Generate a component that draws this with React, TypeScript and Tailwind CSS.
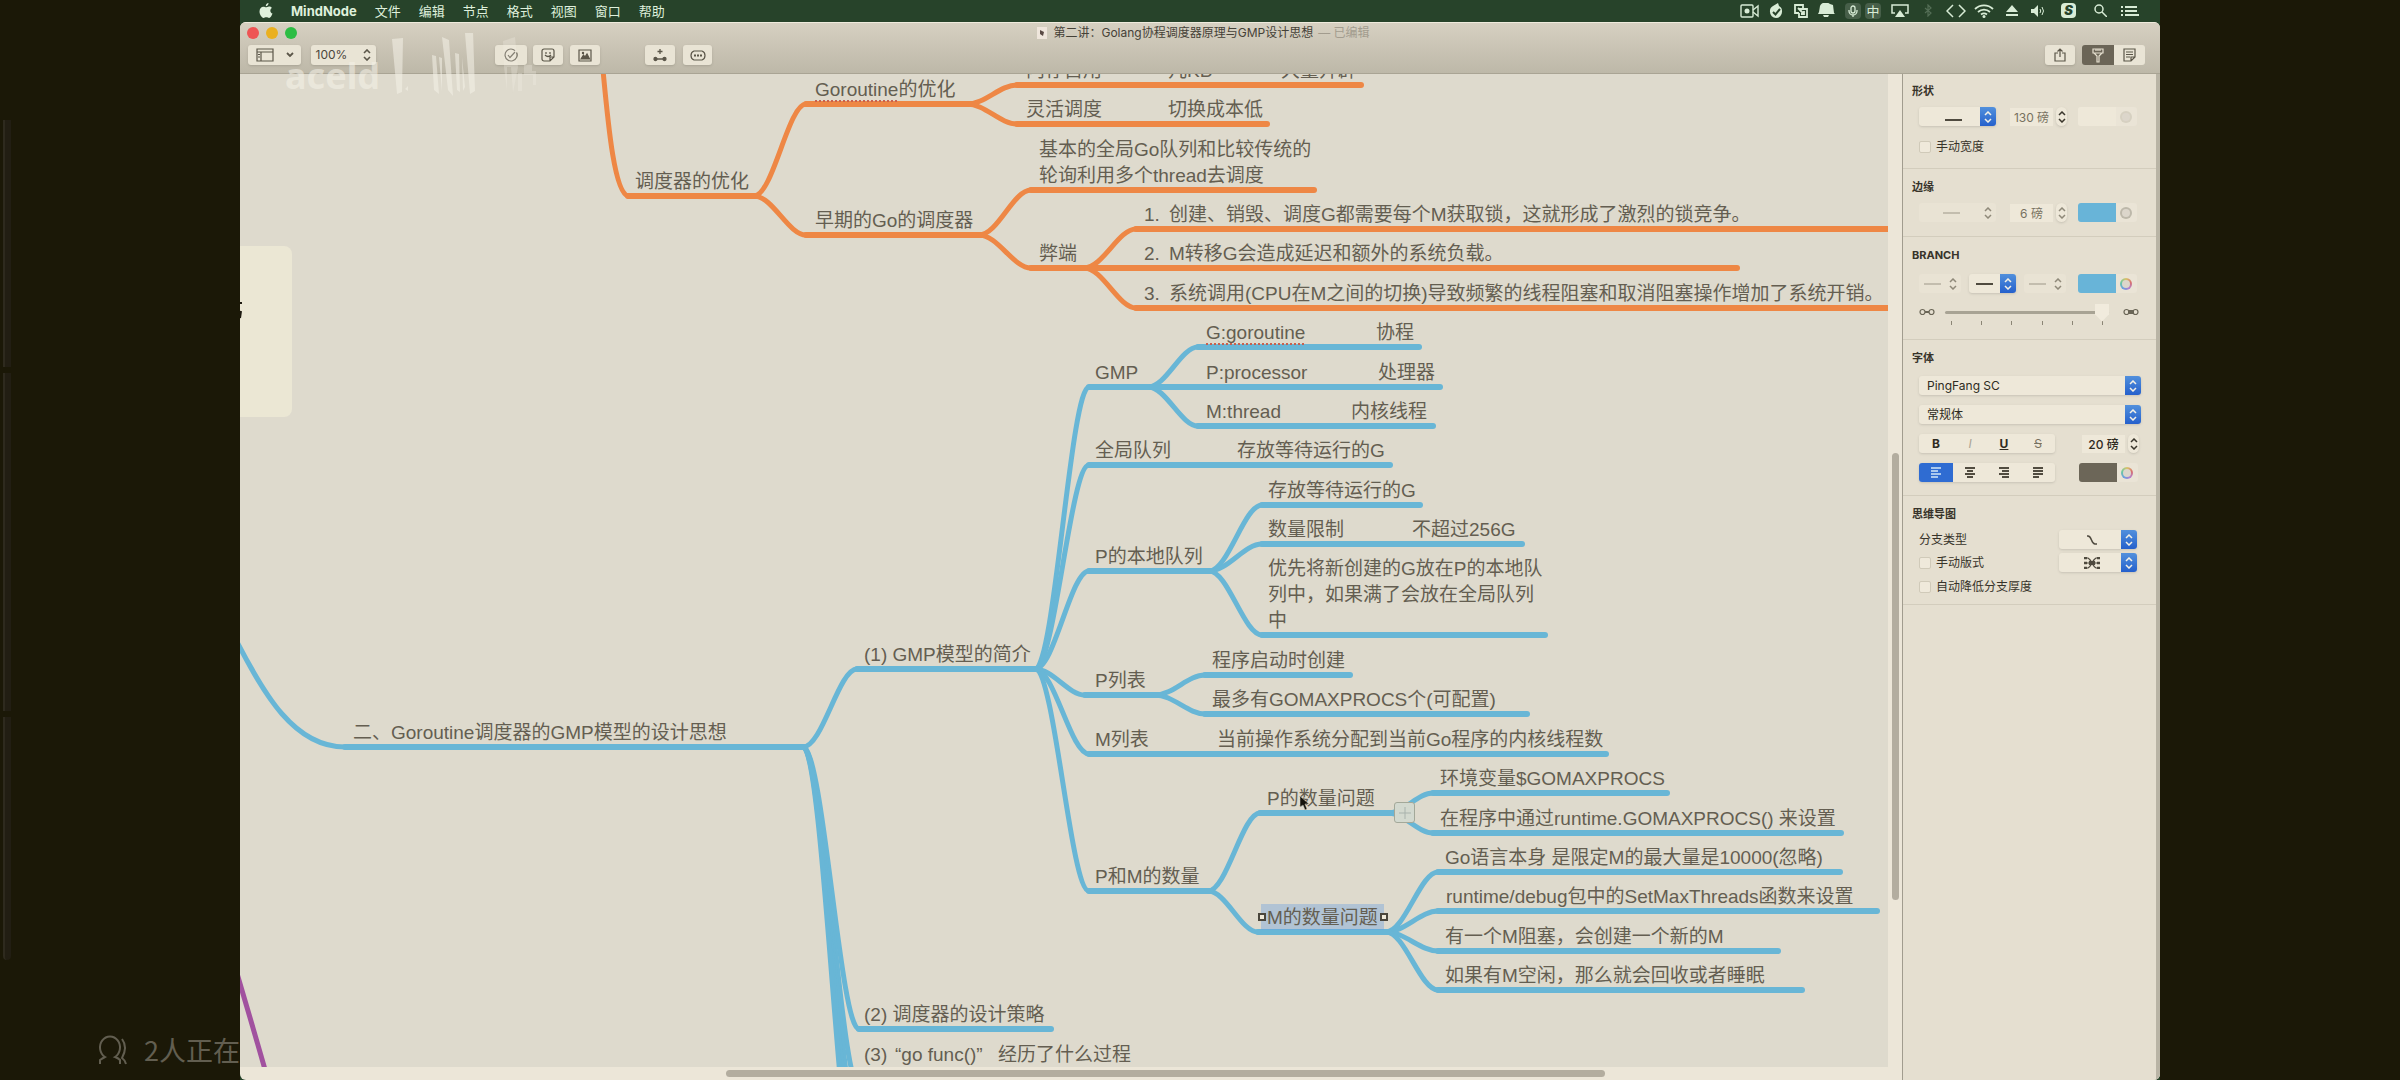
import type { ReactNode } from "react";

/* ------------------------------------------------------------------ */
/* Mind map data                                                       */
/* ------------------------------------------------------------------ */

const ORANGE = "#ee8745";
const BLUE = "#68b6d6";
const PURPLE = "#a1519f";

/* Offset of the visible part of the document canvas. */
const SCROLL = { x: 240, y: 74 };

type Label = { x: number; text: string; misspelt?: string };
type Topic = {
  color: string;
  from: number;
  to: number;
  y: number;
  labels: Label[];
  lines?: number;
  selected?: boolean;
};

const topics: Topic[] = [
  { color: ORANGE, from: 628, to: 758, y: 196, labels: [{ x: 635, text: "调度器的优化" }] },
  { color: ORANGE, from: 806, to: 972, y: 104, labels: [{ x: 815, text: "的优化", misspelt: "Goroutine" }] },
  { color: ORANGE, from: 1017, to: 1361, y: 85, labels: [{ x: 1026, text: "内存占用" }, { x: 1168, text: "几KB" }, { x: 1281, text: "大量开辟" }] },
  { color: ORANGE, from: 1017, to: 1267, y: 124, labels: [{ x: 1026, text: "灵活调度" }, { x: 1168, text: "切换成本低" }] },
  { color: ORANGE, from: 806, to: 984, y: 235, labels: [{ x: 815, text: "早期的Go的调度器" }] },
  { color: ORANGE, from: 1031, to: 1314, y: 190, lines: 2, labels: [{ x: 1039, text: "基本的全局Go队列和比较传统的\n轮询利用多个thread去调度" }] },
  { color: ORANGE, from: 1031, to: 1090, y: 268, labels: [{ x: 1039, text: "弊端" }] },
  { color: ORANGE, from: 1136, to: 1900, y: 229, labels: [{ x: 1144, text: "1." }, { x: 1169, text: "创建、销毁、调度G都需要每个M获取锁，这就形成了激烈的锁竞争。" }] },
  { color: ORANGE, from: 1090, to: 1737, y: 268, labels: [{ x: 1144, text: "2." }, { x: 1169, text: "M转移G会造成延迟和额外的系统负载。" }] },
  { color: ORANGE, from: 1136, to: 1900, y: 308, labels: [{ x: 1144, text: "3." }, { x: 1169, text: "系统调用(CPU在M之间的切换)导致频繁的线程阻塞和取消阻塞操作增加了系统开销。" }] },

  { color: BLUE, from: 345, to: 805, y: 747, labels: [{ x: 353, text: "二、Goroutine调度器的GMP模型的设计思想" }] },
  { color: BLUE, from: 857, to: 1038, y: 669, labels: [{ x: 864, text: "(1) GMP模型的简介" }] },
  { color: BLUE, from: 859, to: 1051, y: 1029, labels: [{ x: 864, text: "(2) 调度器的设计策略" }] },
  { color: BLUE, from: 860, to: 1130, y: 1069, labels: [{ x: 864, text: "(3)" }, { x: 895, text: "“go func()”" }, { x: 998, text: "经历了什么过程" }] },

  { color: BLUE, from: 1089, to: 1152, y: 387, labels: [{ x: 1095, text: "GMP" }] },
  { color: BLUE, from: 1198, to: 1419, y: 347, labels: [{ x: 1206, text: "", misspelt: "G:goroutine" }, { x: 1376, text: "协程" }] },
  { color: BLUE, from: 1152, to: 1440, y: 387, labels: [{ x: 1206, text: "P:processor" }, { x: 1378, text: "处理器" }] },
  { color: BLUE, from: 1198, to: 1433, y: 426, labels: [{ x: 1206, text: "M:thread" }, { x: 1351, text: "内核线程" }] },
  { color: BLUE, from: 1089, to: 1390, y: 465, labels: [{ x: 1095, text: "全局队列" }, { x: 1237, text: "存放等待运行的G" }] },
  { color: BLUE, from: 1089, to: 1212, y: 571, labels: [{ x: 1095, text: "P的本地队列" }] },
  { color: BLUE, from: 1262, to: 1420, y: 505, labels: [{ x: 1268, text: "存放等待运行的G" }] },
  { color: BLUE, from: 1262, to: 1522, y: 544, labels: [{ x: 1268, text: "数量限制" }, { x: 1412, text: "不超过256G" }] },
  { color: BLUE, from: 1262, to: 1545, y: 635, lines: 3, labels: [{ x: 1268, text: "优先将新创建的G放在P的本地队\n列中，如果满了会放在全局队列\n中" }] },
  { color: BLUE, from: 1085, to: 1160, y: 695, labels: [{ x: 1095, text: "P列表" }] },
  { color: BLUE, from: 1205, to: 1350, y: 675, labels: [{ x: 1212, text: "程序启动时创建" }] },
  { color: BLUE, from: 1205, to: 1527, y: 714, labels: [{ x: 1212, text: "最多有GOMAXPROCS个(可配置)" }] },
  { color: BLUE, from: 1089, to: 1606, y: 754, labels: [{ x: 1095, text: "M列表" }, { x: 1217, text: "当前操作系统分配到当前Go程序的内核线程数" }] },
  { color: BLUE, from: 1089, to: 1211, y: 891, labels: [{ x: 1095, text: "P和M的数量" }] },
  { color: BLUE, from: 1260, to: 1392, y: 813, labels: [{ x: 1267, text: "P的数量问题" }] },
  { color: BLUE, from: 1258, to: 1388, y: 932, selected: true, labels: [{ x: 1267, text: "M的数量问题" }] },
  { color: BLUE, from: 1433, to: 1667, y: 793, labels: [{ x: 1440, text: "环境变量$GOMAXPROCS" }] },
  { color: BLUE, from: 1433, to: 1841, y: 833, labels: [{ x: 1440, text: "在程序中通过runtime.GOMAXPROCS() 来设置" }] },
  { color: BLUE, from: 1438, to: 1840, y: 872, labels: [{ x: 1445, text: "Go语言本身 是限定M的最大量是10000(忽略)" }] },
  { color: BLUE, from: 1438, to: 1877, y: 911, labels: [{ x: 1446, text: "runtime/debug包中的SetMaxThreads函数来设置" }] },
  { color: BLUE, from: 1438, to: 1778, y: 951, labels: [{ x: 1445, text: "有一个M阻塞，会创建一个新的M" }] },
  { color: BLUE, from: 1438, to: 1802, y: 990, labels: [{ x: 1445, text: "如果有M空闲，那么就会回收或者睡眠" }] },
];

/* Connectors: colour, parent end, child start. */
const links: [string, number, number, number, number][] = [
  [ORANGE, 754, 196, 806, 104],
  [ORANGE, 754, 196, 806, 235],
  [ORANGE, 967, 104, 1017, 85],
  [ORANGE, 967, 104, 1017, 124],
  [ORANGE, 979, 235, 1031, 190],
  [ORANGE, 979, 235, 1031, 268],
  [ORANGE, 1084, 268, 1136, 229],
  [ORANGE, 1084, 268, 1136, 308],
  [BLUE, 803, 747, 857, 669],
  [BLUE, 803, 747, 859, 1029],
  [BLUE, 803, 747, 860, 1090],
  [BLUE, 803, 747, 860, 1130],
  [BLUE, 803, 747, 860, 1170],
  [BLUE, 803, 747, 860, 1210],
  [BLUE, 1035, 669, 1089, 387],
  [BLUE, 1035, 669, 1089, 465],
  [BLUE, 1035, 669, 1089, 571],
  [BLUE, 1035, 669, 1085, 695],
  [BLUE, 1035, 669, 1089, 754],
  [BLUE, 1035, 669, 1089, 891],
  [BLUE, 1148, 387, 1198, 347],
  [BLUE, 1148, 387, 1198, 426],
  [BLUE, 1209, 571, 1262, 505],
  [BLUE, 1209, 571, 1262, 544],
  [BLUE, 1209, 571, 1262, 635],
  [BLUE, 1155, 695, 1205, 675],
  [BLUE, 1155, 695, 1205, 714],
  [BLUE, 1208, 891, 1260, 813],
  [BLUE, 1208, 891, 1258, 932],
  [BLUE, 1388, 813, 1433, 793],
  [BLUE, 1388, 813, 1433, 833],
  [BLUE, 1386, 932, 1438, 872],
  [BLUE, 1386, 932, 1438, 911],
  [BLUE, 1386, 932, 1438, 951],
  [BLUE, 1386, 932, 1438, 990],
];

function curve(x0: number, y0: number, x1: number, y1: number) {
  const dx = x1 - x0;
  return `M${x0} ${y0}C${x0 + dx * 0.36} ${y0} ${x0 + dx * 0.66} ${y1} ${x1} ${y1}`;
}

const TOPIC_LINE = 26;

function MindMap() {
  return (
    <div className="relative min-h-0 min-w-0 overflow-hidden bg-[#dedacd]">
      <div className="absolute left-0 top-[172px] h-[171px] w-[52px] rounded-r-lg bg-[#ebe7d4]" />
      <svg className="absolute left-0 top-0 h-[1006px] w-[1660px]" viewBox="240 74 1660 1006" fill="none">
        <g strokeWidth="5" strokeLinecap="round">
          <path stroke={ORANGE} d="M602 60C607 110 613 192 628 196" />
          <path stroke={BLUE} d="M236 640C264 694 294 747 345 747" />
          <path stroke={PURPLE} d="M236 970Q252 1024 268 1080" />
          {links.map(([color, x0, y0, x1, y1], i) => (
            <path key={i} stroke={color} d={curve(x0, y0, x1, y1)} />
          ))}
        </g>
        <g strokeWidth="6" strokeLinecap="round">
          {topics
            .filter((t) => t.y < 1060)
            .map((t, i) => (
              <path key={i} stroke={t.color} d={`M${t.from} ${t.y}H${t.to}`} />
            ))}
        </g>
        <path d="M240 303h2M240 318l1-7" stroke="#1d1a10" strokeWidth="2" />
      </svg>
      {topics.map((t) =>
        t.labels.map((l) => (
          <p
            key={`${l.x}-${t.y}`}
            className="absolute whitespace-pre font-['Liberation_Sans','Noto_Sans_CJK_SC',sans-serif] text-[19px] leading-[26px] text-[#645e51]"
            style={{ left: l.x - SCROLL.x, top: t.y - SCROLL.y - 1 - TOPIC_LINE * (t.lines ?? 1) }}
          >
            {t.selected && <span className="absolute -left-[6px] -top-px h-[26px] w-[123px] bg-[#6f9fdf]/40" />}
            {t.selected && <span className="absolute -left-[9px] top-[8px] size-[8px] border-2 border-[#4a463c] bg-[#efe9d9]" />}
            {t.selected && <span className="absolute left-[113px] top-[8px] size-[8px] border-2 border-[#4a463c] bg-[#efe9d9]" />}
            {l.misspelt && (
              <span className="underline decoration-[#c8604f] decoration-dotted decoration-2 underline-offset-4">{l.misspelt}</span>
            )}
            <span className="relative">{l.text}</span>
          </p>
        )),
      )}
      <button
        aria-label="折叠"
        className="absolute left-[1154px] top-[728px] flex h-[21px] w-[21px] items-center justify-center rounded-[3px] border border-[#a3a899] bg-[#d3d9cf]"
      >
        <svg viewBox="0 0 12 12" className="size-3" stroke="#a9b3ad">
          <path d="M6 0v12M0 6h12" />
        </svg>
      </button>
      <svg className="absolute left-[1058px] top-[721px] h-4 w-3" viewBox="0 0 12 16">
        <path d="M2 1v11l3-2 2 5 2-1-2-5h4z" fill="#15130c" stroke="#d9d4c5" strokeWidth="0.5" />
      </svg>
    </div>
  );
}

/* ------------------------------------------------------------------ */
/* Menu bar                                                            */
/* ------------------------------------------------------------------ */

const menus = ["文件", "编辑", "节点", "格式", "视图", "窗口", "帮助"];

function StatusIcons() {
  return (
    <div className="ml-auto flex items-center fill-none stroke-[#d8ecd6] pr-[21px] text-[#d8ecd6]">
      <svg className="h-[14px] w-[19px]" viewBox="0 0 19 14" strokeWidth="1.4">
        <rect x="1" y="1" width="12" height="12" rx="1" />
        <circle cx="7" cy="7" r="2.5" fill="currentColor" stroke="none" />
        <path d="M13 6l5-4v10l-5-4" />
      </svg>
      <svg className="ml-[10px] h-4 w-[14px]" viewBox="0 0 14 16">
        <path d="M4 3l5-3 1 3a6 6 0 013 6 6 6 0 01-6 6 6 6 0 01-6-6 6 6 0 013-6z" fill="currentColor" stroke="none" />
        <path d="M4 9l2.500 2.500L11 6" stroke="#27432a" strokeWidth="2" />
      </svg>
      <svg className="ml-[11px] h-[14px] w-[14px]" viewBox="0 0 14 14" strokeWidth="1.800">
        <path d="M9 5V1H1v8h4M5 5h8v8H5V9M4 4l6 6M10 7v3H7" />
      </svg>
      <svg className="ml-[9px] h-[15px] w-[18px]" viewBox="0 0 18 15">
        <path d="M3 3a6 5 0 0110-2l3 1 1 8 1 1H1l1-2zM6 12h6l-1 2H7z" fill="currentColor" stroke="none" />
      </svg>
      <span className="ml-[10px] flex size-4 items-center justify-center rounded-sm bg-white/15">
        <svg className="h-3 w-[10px]" viewBox="0 0 10 12" strokeWidth="1.300">
          <rect x="3" y="1" width="4" height="7" rx="2" />
          <path d="M1 5v1a4 4 0 008 0V5M5 10v2" />
        </svg>
      </span>
      <span className="ml-1 flex size-4 items-center justify-center rounded-sm bg-white/15 text-[13px] leading-4">中</span>
      <svg className="ml-[10px] h-[14px] w-[18px]" viewBox="0 0 18 14" strokeWidth="1.500">
        <path d="M4 9H1V1h16v8h-3" />
        <path d="M9 6l5 7H4z" fill="currentColor" stroke="none" />
      </svg>
      <svg className="ml-[15px] h-[13px] w-2 opacity-25" viewBox="0 0 8 13" strokeWidth="1.200">
        <path d="M1 4l6 5-3 3V1l3 3-6 5" />
      </svg>
      <svg className="ml-[14px] h-[14px] w-5" viewBox="0 0 20 14" strokeWidth="1.500">
        <path d="M7 1L1 7l6 6M13 1l6 6-6 6" />
      </svg>
      <svg className="ml-[8px] h-[14px] w-5" viewBox="0 0 20 14" strokeWidth="1.800">
        <path d="M1 5a13 13 0 0118 0M4 8a9 9 0 0112 0M7 10.500a5 5 0 016 0" />
        <circle cx="10" cy="12.500" r="1.500" fill="currentColor" stroke="none" />
      </svg>
      <svg className="ml-[12px] h-[11px] w-3" viewBox="0 0 12 11" fill="currentColor" stroke="none">
        <path d="M6 0l6 7H0zM0 9h12v2H0z" />
      </svg>
      <svg className="ml-[13px] h-3 w-[14px]" viewBox="0 0 14 12">
        <path d="M0 4h3l4-4v12L3 8H0z" fill="currentColor" stroke="none" />
        <path d="M9 4q1.500 2 0 4M11 2q3 4 0 8" />
      </svg>
      <span className="ml-4 flex h-[15px] w-[15px] items-center justify-center rounded-sm bg-[#d8ecd6] text-[13px] font-black italic leading-none text-[#27432a]">
        S
      </span>
      <svg className="ml-[18px] size-[13px]" viewBox="0 0 13 13" strokeWidth="1.500">
        <circle cx="5" cy="5" r="4" />
        <path d="M8 8l5 5" />
      </svg>
      <svg className="ml-[14px] h-3 w-[18px]" viewBox="0 0 18 12" strokeWidth="2">
        <path d="M0 2h2M4 2h12M0 6h2M4 6h12M0 10h2M4 10h14" />
      </svg>
    </div>
  );
}

function MenuBar() {
  return (
    <header className="flex h-[22px] shrink-0 items-center bg-[#27432a] pb-px text-[13px] leading-5 text-[#dff0dc]">
      <svg className="ml-[19px] h-4 w-[14px]" viewBox="0 0 14 16" fill="currentColor">
        <path d="M9.500 0c.1 1.600-1.200 3.100-2.700 3.200C6.600 1.700 8 .2 9.500 0zM7 4.300c.7 0 1.700-.9 3.200-.8 1 0 2 .5 2.700 1.400-2.300 1.400-2 4.700.6 5.700-.7 2-2 4.300-3.400 4.300-1 0-1.500-.7-2.800-.7s-1.800.7-2.800.7C2.700 14.900.500 11.600.500 8.600c0-3 1.900-4.900 3.900-4.900 1.100 0 2 .6 2.600.6z" />
      </svg>
      <nav className="flex gap-[18px]">
        <button className="ml-[18px] font-bold">MindNode</button>
        {menus.map((m) => (
          <button key={m}>{m}</button>
        ))}
      </nav>
      <StatusIcons />
    </header>
  );
}

/* ------------------------------------------------------------------ */
/* Title and tool bar                                                  */
/* ------------------------------------------------------------------ */

function ToolButton({ label, className, children }: { label: string; className: string; children: ReactNode }) {
  return (
    <button
      aria-label={label}
      className={`flex h-5 items-center justify-center rounded-[3px] bg-[#e9e4d5] fill-none stroke-[#5b5649] shadow-sm ${className}`}
    >
      {children}
    </button>
  );
}

function Watermark() {
  return (
    <div className="pointer-events-none absolute left-[45px] top-[11px] z-10 flex text-[#f5f2e8] opacity-55">
      <span className="pt-[26px] font-['Noto_Sans',sans-serif] text-[36px] font-bold leading-[34px]">aceld</span>
      <svg className="ml-3 h-[66px] w-[145px]" viewBox="0 0 145 66" fill="currentColor">
        <path d="M0 6l11-1-1 54-5 2zM13 56l3-3v5zM40 22l4 1 3 38-5-4zM50 4l7 3 4 56-5-6zM63 20l4 1 1 38-3-2zM73 0l8-2 2 60-5 3zM47 24l3 1v34zM70 24l3 30-2 4z" />
        <path d="M111 8l12-4 3 30-5 26-2-26h-4v24l-3-24zM132 32h8v6h4v14h-3V42h-9zM126 40h4v18h-4z" opacity=".5" />
      </svg>
    </div>
  );
}

function TitleBar() {
  return (
    <div className="relative h-[52px] shrink-0 border-b border-[#a9a494] border-t border-t-[#efebdd] bg-linear-to-b from-[#d6d0c1] to-[#bdb8a8]">
      <div className="flex h-[19px] items-center">
        <div className="flex flex-1 gap-[7px] pl-[7px]">
          <button aria-label="关闭" className="size-3 rounded-full bg-[#ee5454]" />
          <button aria-label="最小化" className="size-3 rounded-full bg-[#eab020]" />
          <button aria-label="缩放" className="size-3 rounded-full bg-[#2dbd44]" />
        </div>
        <h1 className="flex items-center text-[12px] leading-4 text-[#454137]">
          <svg className="mr-[6px] h-3 w-[10px]" viewBox="0 0 10 12">
            <path d="M0 0h10v12H0z" fill="#efe6dc" />
            <path d="M3 3l4 2-1 4-3-2z" fill="#5a4a44" />
          </svg>
          <span>第二讲：Golang协程调度器原理与GMP设计思想</span>
          <span className="ml-[5px] text-[#a29c8e]">— 已编辑</span>
        </h1>
        <div className="flex-1" />
      </div>
      <div className="mt-[3px] flex items-center pl-2 pr-[15px]">
        <ToolButton label="显示" className="w-[53px] gap-3">
          <svg className="h-[14px] w-[18px]" viewBox="0 0 18 14" strokeWidth="1.200">
            <path d="M1 1h16v12H1zM1 4h16M5 4v9M2 6.500h2M2 9h2" />
          </svg>
          <svg className="h-[6px] w-2" viewBox="0 0 8 6" strokeWidth="1.800">
            <path d="M1 1l3 3 3-3" />
          </svg>
        </ToolButton>
        <ToolButton label="缩放比例" className="ml-[10px] w-[65px] gap-4 text-[12px] text-[#4b463b]">
          <span>100%</span>
          <svg className="h-3 w-2" viewBox="0 0 8 12" strokeWidth="1.600">
            <path d="M1 4l3-3 3 3M1 8l3 3 3-3" />
          </svg>
        </ToolButton>
        <ToolButton label="任务" className="ml-[119px] w-8">
          <svg className="size-[14px]" viewBox="0 0 14 14" strokeWidth="1.200">
            <path d="M12.500 4.500A6 6 0 117 1c2 0 3 .7 4 1.700" />
            <path d="M4 7l2 2.500L11 4" />
          </svg>
        </ToolButton>
        <ToolButton label="贴纸" className="ml-[6px] w-[30px]">
          <svg className="size-[14px]" viewBox="0 0 14 14" strokeWidth="1.200">
            <path d="M3 1h8a2 2 0 012 2v6l-4 4H3a2 2 0 01-2-2V3a2 2 0 012-2zM13 9h-4v4M5 4v2M9 4v2M4 7q3 3 6 0" />
          </svg>
        </ToolButton>
        <ToolButton label="图像" className="ml-[7px] w-[30px]">
          <svg className="h-[13px] w-[14px]" viewBox="0 0 14 13" strokeWidth="1.200">
            <path d="M1 1h12v11H1z" />
            <path d="M3 10l2.500-4 1.500 2 2-3 2.500 5z" fill="#5b5649" />
            <circle cx="5" cy="4" r=".6" />
          </svg>
        </ToolButton>
        <ToolButton label="新建节点" className="ml-[45px] w-[30px]">
          <svg className="size-[14px]" viewBox="0 0 14 14" strokeWidth="1.300">
            <path d="M7 1v5M4.500 3.500h5M2 11h10" />
            <circle cx="2.500" cy="11" r="1.500" fill="#5b5649" />
            <circle cx="11.500" cy="11" r="1.500" fill="#5b5649" />
          </svg>
        </ToolButton>
        <ToolButton label="更多" className="ml-2 w-[29px]">
          <svg className="h-[11px] w-4" viewBox="0 0 16 11" strokeWidth="1.200">
            <path d="M4 1h8q3 1 3 4.500T12 10H4Q1 9 1 5.500T4 1z" />
            <path d="M4 5.500h2M7 5.500h2M10 5.500h2" strokeWidth="2" />
          </svg>
        </ToolButton>
        <ToolButton label="共享" className="ml-auto w-[30px]">
          <svg className="h-[14px] w-3" viewBox="0 0 12 14" strokeWidth="1.200">
            <path d="M4 5H1v8h10V5H8M6 9V1M3.500 3.500L6 1l2.500 2.500" />
          </svg>
        </ToolButton>
        <div className="ml-[7px] flex overflow-hidden rounded-[3px]">
          <button aria-label="样式" aria-pressed="true" className="flex h-5 w-8 items-center justify-center bg-[#6b6557]">
            <svg className="h-[15px] w-3" viewBox="0 0 12 15" fill="none" stroke="#e6e0d0" strokeWidth="1.200">
              <path d="M1 1h10v4H1zM2 5l3 3v6h2V8l3-3M4 1v2M6 1v2M8 1v2" />
            </svg>
          </button>
          <button aria-label="备注" className="flex h-5 w-[31px] items-center justify-center bg-[#e9e4d5]">
            <svg className="h-[14px] w-[13px]" viewBox="0 0 13 14" fill="none" stroke="#5b5649" strokeWidth="1.200">
              <path d="M1 1h11v8l-4 4H1zM12 9H8v4M3 4h7M3 6.500h7M3 9h4" />
            </svg>
          </button>
        </div>
      </div>
    </div>
  );
}

/* ------------------------------------------------------------------ */
/* Inspector                                                           */
/* ------------------------------------------------------------------ */

function Arrows({ stroke }: { stroke: string }) {
  return (
    <svg className="h-3 w-2" viewBox="0 0 8 12" fill="none" stroke={stroke} strokeWidth="1.500">
      <path d="M1 4l3-3 3 3M1 8l3 3 3-3" />
    </svg>
  );
}

function Dropdown({
  label,
  width,
  value,
  art,
  disabled,
}: {
  label: string;
  width: string;
  value?: string;
  art?: ReactNode;
  disabled?: boolean;
}) {
  return (
    <span className={`relative flex h-[19px] rounded-[3px] ${disabled ? "bg-[#e9e3d4]" : "bg-[#eee8d9] shadow-sm"} ${width}`}>
      <select
        aria-label={label}
        disabled={disabled}
        className="h-full w-full appearance-none bg-transparent pl-2 text-[12px] leading-4 text-[#2f2b22]"
      >
        <option>{value}</option>
      </select>
      {art && <span className="pointer-events-none absolute inset-y-0 left-0 right-4 flex items-center justify-center">{art}</span>}
      <span
        className={`pointer-events-none absolute inset-y-0 right-0 flex w-4 items-center justify-center rounded-r-[3px] ${
          disabled ? "" : "bg-linear-to-b from-[#5290dc] to-[#2560cc]"
        }`}
      >
        <Arrows stroke={disabled ? "#8f8979" : "#f3f0e6"} />
      </span>
    </span>
  );
}

function Dash({ faded }: { faded?: boolean }) {
  return <span className={`h-[2px] w-[17px] ${faded ? "bg-[#c3bdae]" : "bg-[#4f4a3f]"}`} />;
}

function Measure({ label, value, strong, dim }: { label: string; value: string; strong?: boolean; dim?: boolean }) {
  return (
    <span className="flex items-center gap-[3px]">
      <input
        aria-label={label}
        defaultValue={value}
        className={`h-[18px] w-[43px] bg-[#eee8d9] text-center text-[12px] leading-4 ${strong ? "font-medium text-[#2f2b22]" : "text-[#77715f]"}`}
      />
      <button aria-label={`${label}步进`} className="flex h-[19px] w-[11px] items-center justify-center rounded-md bg-[#eee8d9] shadow-sm">
        <Arrows stroke={dim ? "#8f8979" : "#3a362c"} />
      </button>
    </span>
  );
}

function Wheel({ tone }: { tone: "colour" | "grey" | "faint" }) {
  const fill =
    tone === "colour"
      ? "bg-[conic-gradient(#d9c46a,#d96f6f,#b27fd0,#6a9fe0,#6cc9a0,#d9c46a)]"
      : tone === "grey"
        ? "bg-[#bdb8aa]"
        : "bg-[#d6d0c1]";
  return (
    <span className={`flex size-3 items-center justify-center rounded-full ${fill}`}>
      <span className="size-2 rounded-full bg-[#dcd6cb]" />
    </span>
  );
}

function ColorWell({ label, swatch, tone }: { label: string; swatch: string; tone: "colour" | "grey" | "faint" }) {
  return (
    <button aria-label={label} className="ml-auto flex h-[19px] w-[59px] items-center overflow-hidden rounded-[3px] bg-[#eae4d6]">
      <span className={`h-full w-[38px] ${swatch}`} />
      <span className="pl-1">
        <Wheel tone={tone} />
      </span>
    </button>
  );
}

function Check({ label }: { label: string }) {
  return (
    <label className="flex items-center gap-[5px] text-[12px] leading-4 text-[#37332a]">
      <input type="checkbox" className="size-3 appearance-none rounded-[2px] border border-[#d0cab9] bg-[#efe9db]" />
      {label}
    </label>
  );
}

function Section({ title, className, children }: { title: string; className: string; children: ReactNode }) {
  return (
    <section className={`border-b border-[#d3cdbd] pl-[9px] ${className}`}>
      <h2 className="text-[11px] font-bold leading-4 text-[#37332a]">{title}</h2>
      <div className="pl-[7px]">{children}</div>
    </section>
  );
}

const alignments = [
  { label: "左对齐", d: "M1 1h10M1 4h7M1 7h10M1 10h7" },
  { label: "居中", d: "M1 1h10M3 4h6M1 7h10M3 10h6" },
  { label: "右对齐", d: "M1 1h10M4 4h7M1 7h10M4 10h7" },
  { label: "两端对齐", d: "M1 1h10M1 4h10M1 7h10M1 10h6" },
];

function Inspector() {
  return (
    <aside className="w-[258px] shrink-0 border-l border-r-4 border-l-[#a19c8e] border-r-[#b9b4a5] bg-[#e5dfd0]">
      <Section title="形状" className="h-[95px] pt-[9px]">
        <div className="mt-2 flex items-center pr-[19px]">
          <Dropdown label="形状样式" width="w-[77px]" art={<span className="ml-2 mt-[6px] flex"><Dash /></span>} />
          <span className="ml-[14px]">
            <Measure label="宽度" value="130 磅" />
          </span>
          <ColorWell label="填充颜色" swatch="bg-[#eee8d9]" tone="faint" />
        </div>
        <div className="mt-[13px]">
          <Check label="手动宽度" />
        </div>
      </Section>

      <Section title="边缘" className="h-[68px] pt-[10px]">
        <div className="mt-2 flex items-center pr-[19px]">
          <Dropdown label="边缘样式" width="w-[77px]" disabled art={<span className="ml-1 flex"><Dash faded /></span>} />
          <span className="ml-[14px]">
            <Measure label="边缘宽度" value="6 磅" dim />
          </span>
          <ColorWell label="边缘颜色" swatch="bg-[#68b4d8]" tone="grey" />
        </div>
      </Section>

      <Section title="BRANCH" className="h-[103px] pt-[10px]">
        <div className="mt-[11px] flex items-center gap-2 pr-[19px]">
          <Dropdown label="起点样式" width="w-[42px]" disabled art={<Dash faded />} />
          <Dropdown label="分支样式" width="w-[47px]" art={<Dash />} />
          <Dropdown label="终点样式" width="w-[42px]" disabled art={<Dash faded />} />
          <ColorWell label="分支颜色" swatch="bg-[#68b4d8]" tone="colour" />
        </div>
        <div className="mt-[10px] flex items-start justify-between pr-[17px]">
          <svg className="mt-[5px] h-2 w-4" viewBox="0 0 16 8" fill="none" stroke="#6a6556" strokeWidth="1.200">
            <path d="M6 4h4" strokeWidth="2" />
            <circle cx="3.500" cy="4" r="2.500" />
            <circle cx="12.500" cy="4" r="2.500" />
          </svg>
          <div className="w-[168px] pr-1">
            <input
              type="range"
              aria-label="分支粗细"
              min="0"
              max="5"
              defaultValue="5"
              className="block h-[18px] w-full appearance-none bg-transparent [&::-webkit-slider-runnable-track]:h-[3px] [&::-webkit-slider-runnable-track]:rounded [&::-webkit-slider-runnable-track]:bg-[#a8a394] [&::-webkit-slider-thumb]:-mt-[7px] [&::-webkit-slider-thumb]:h-[18px] [&::-webkit-slider-thumb]:w-[14px] [&::-webkit-slider-thumb]:appearance-none [&::-webkit-slider-thumb]:bg-[#f1ebdd] [&::-webkit-slider-thumb]:[clip-path:polygon(0_0,100%_0,100%_60%,50%_100%,0_60%)]"
            />
            <div className="flex justify-between px-[6px]">
              {[0, 1, 2, 3, 4, 5].map((n) => (
                <span key={n} className="h-[4px] w-px bg-[#8b8575]" />
              ))}
            </div>
          </div>
          <svg className="mt-[5px] h-2 w-4" viewBox="0 0 16 8" fill="none" stroke="#6a6556" strokeWidth="1.200">
            <path d="M5 4h6" strokeWidth="4" />
            <circle cx="3.500" cy="4" r="2.500" />
            <circle cx="12.500" cy="4" r="2.500" />
          </svg>
        </div>
      </Section>

      <Section title="字体" className="h-[156px] pt-[10px]">
        <div className="flex flex-col gap-[10px] pr-[15px] pt-[10px]">
          <Dropdown label="字体" width="w-full" value="PingFang SC" />
          <Dropdown label="字重" width="w-full" value="常规体" />
          <div className="flex items-center justify-between pr-[2px]">
            <div className="grid h-[19px] w-[136px] grid-cols-4 rounded-[3px] bg-[#eee8d9] text-[12px] leading-4 text-[#2f2b22] shadow-sm">
              <button className="font-bold">B</button>
              <button className="italic text-[#aaa493]">I</button>
              <button className="font-bold underline">U</button>
              <button className="text-[#77715f] line-through">S</button>
            </div>
            <Measure label="字号" value="20 磅" strong />
          </div>
          <div className="flex items-center pr-[3px]">
            <div className="grid h-[19px] w-[136px] grid-cols-4 overflow-hidden rounded-[3px] bg-[#eee8d9] shadow-sm">
              {alignments.map((a, i) => (
                <button
                  key={a.label}
                  aria-label={a.label}
                  aria-pressed={i === 0}
                  className={`flex items-center justify-center ${i === 0 ? "bg-[#2f6cd2] text-[#a9c8ee]" : "text-[#514c40]"}`}
                >
                  <svg className="h-[11px] w-3" viewBox="0 0 12 11" stroke="currentColor" strokeWidth="2">
                    <path d={a.d} />
                  </svg>
                </button>
              ))}
            </div>
            <ColorWell label="文字颜色" swatch="bg-[#6c6658]" tone="colour" />
          </div>
        </div>
      </Section>

      <Section title="思维导图" className="h-[109px] pt-[10px]">
        <div className="mt-2 grid grid-cols-[1fr_auto] items-center gap-y-1 pr-[19px]">
          <span className="text-[12px] leading-4 text-[#37332a]">分支类型</span>
          <Dropdown
            label="分支类型"
            width="w-[78px]"
            art={
              <svg className="ml-1 size-[10px]" viewBox="0 0 10 10" fill="none" stroke="#4f4a3f" strokeWidth="1.500">
                <path d="M0 1h1q2 0 3.500 4T8 9h2" />
              </svg>
            }
          />
          <Check label="手动版式" />
          <Dropdown
            label="版式"
            width="w-[78px]"
            art={
              <svg className="ml-1 h-3 w-4" viewBox="0 0 16 12" fill="none" stroke="#4f4a3f" strokeWidth="1.200">
                <path d="M0 1h4q2 1 4 5 2-4 4-5h4M0 11h4q2-1 4-5 2 4 4 5h4M0 6h16" />
                <rect x="5.500" y="4.500" width="5" height="3" fill="#4f4a3f" />
                <path d="M0 1h3M0 6h3M0 11h3M13 1h3M13 6h3M13 11h3" strokeWidth="2.400" />
              </svg>
            }
          />
          <div className="mt-[3px]">
            <Check label="自动降低分支厚度" />
          </div>
        </div>
      </Section>
    </aside>
  );
}

/* ------------------------------------------------------------------ */
/* Page                                                                */
/* ------------------------------------------------------------------ */

export default function App() {
  return (
    <div className="flex h-screen overflow-hidden bg-[#1b1807] font-['Inter','Noto_Sans_CJK_SC',sans-serif]">
      <div className="flex w-[10%] shrink-0 flex-col overflow-hidden pl-[3px] pt-[120px]">
        <div className="flex flex-1 flex-col gap-[6px] pb-[60px]">
          <div className="w-2 flex-[248] border-l-2 border-[#2e2a1e] bg-[#221e13]" />
          <div className="w-2 flex-[340] border-l-2 border-[#2e2a1e] bg-[#221e13]" />
          <div className="w-2 flex-[244] rounded-b border-l-2 border-[#2e2a1e] bg-[#221e13]" />
        </div>
        <div className="flex h-[60px] items-center justify-end gap-[14px] text-[27px] leading-8 text-[#625e50]">
          <svg className="h-[34px] w-[32px]" viewBox="0 0 32 34" fill="none" stroke="currentColor" strokeWidth="2">
            <path d="M2 31v-4q3-2 5-3a10 11 0 1110 0q3 1 5 3v4M24 6q6 8 0 19 3 2 4 6" />
          </svg>
          <span className="font-['Noto_Sans_CJK_SC',sans-serif]">2人正在</span>
        </div>
      </div>

      <div className="flex min-w-0 flex-1 flex-col bg-[#27432a]">
        <MenuBar />
        <div className="relative flex min-h-0 flex-1 flex-col overflow-hidden rounded-md bg-[#ece6d8]">
          <Watermark />
          <TitleBar />
          <div className="flex min-h-0 flex-1">
            <main className="grid min-w-0 flex-1 grid-cols-[1fr_14px] grid-rows-[1fr_13px]">
              <MindMap />
              <div className="flex flex-col items-center">
                <div className="flex-[379]" />
                <div className="w-[7px] flex-[447] rounded-full bg-[#b3ad9f]" />
                <div className="flex-[167]" />
              </div>
              <div className="flex items-center">
                <div className="flex-[486]" />
                <div className="h-[7px] flex-[879] rounded-full bg-[#b3ad9f]" />
                <div className="flex-[283]" />
              </div>
            </main>
            <Inspector />
          </div>
        </div>
      </div>

      <div className="w-[10%] shrink-0" />
    </div>
  );
}
